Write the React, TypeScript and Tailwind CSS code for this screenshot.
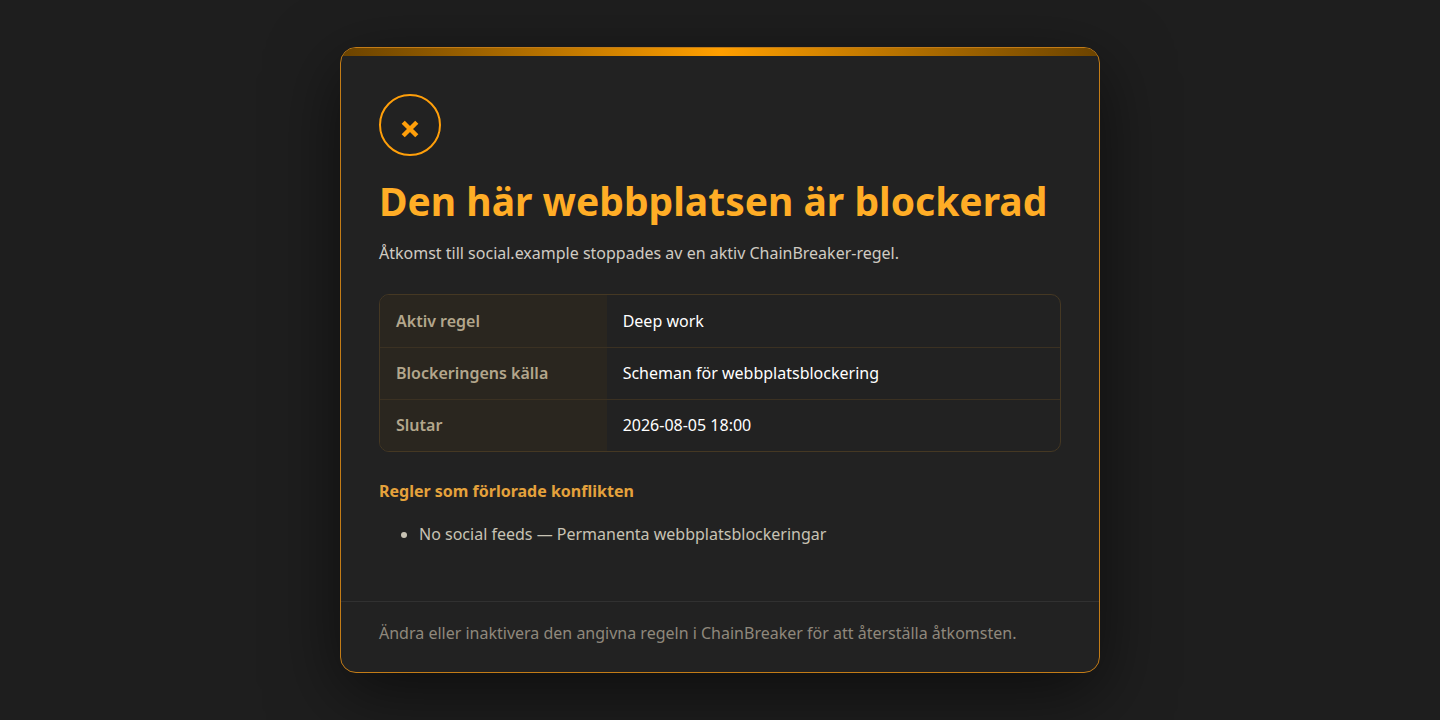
const details = [
  { label: "Aktiv regel", value: "Deep work" },
  { label: "Blockeringens källa", value: "Scheman för webbplatsblockering" },
  { label: "Slutar", value: "2026-08-05 18:00" },
];

const lostRules = ["No social feeds — Permanenta webbplatsblockeringar"];

export default function App() {
  return (
    <div className="flex min-h-screen items-center justify-center bg-[#1e1e1e] px-6 py-8 font-['Noto_Sans','Open_Sans',sans-serif] text-base leading-[30px] text-white">
      <main className="w-full max-w-[760px] overflow-hidden rounded-2xl border border-[#c37c17] bg-[#222222] shadow-[0_20px_70px_rgba(0,0,0,0.55)]">
        <div className="h-2 bg-linear-to-r from-[#6b4300] via-[#ff9f00] to-[#6b4300]" />
        <div className="px-[38px] pt-[38px] pb-[51px]">
          <div className="flex size-[62px] items-center justify-center rounded-full border-2 border-[#ff9f0a] pt-2">
            <svg
              viewBox="0 0 18 18"
              className="size-[18px] text-[#ff9f0a]"
              fill="none"
              stroke="currentColor"
              strokeWidth="4.4"
              aria-hidden="true"
            >
              <path d="M2.2 2.2 15.8 15.8M15.8 2.2 2.2 15.8" />
            </svg>
          </div>
          <h1 className="mt-5 text-[39px] leading-[50px] font-bold text-[#ffad26]">
            Den här webbplatsen är blockerad
          </h1>
          <p className="mt-3 text-[#d0cbc2]">
            Åtkomst till social.example stoppades av en aktiv ChainBreaker-regel.
          </p>
          <div className="mt-[26px] overflow-hidden rounded-[10px] border border-[#453823]">
            <table className="w-full table-fixed text-left">
              <tbody className="divide-y divide-[#3b3122]">
                {details.map((row) => (
                  <tr key={row.label} className="h-[52px]">
                    <th scope="row" className="w-1/3 bg-[#2a261f] px-4 font-semibold text-[#b3a68c]">
                      {row.label}
                    </th>
                    <td className="px-4">{row.value}</td>
                  </tr>
                ))}
              </tbody>
            </table>
          </div>
          <h2 className="mt-6 font-bold text-[#e5a23c]">Regler som förlorade konflikten</h2>
          <ul className="mt-3 list-disc pl-10 leading-8 text-[#c8c3b4]">
            {lostRules.map((rule) => (
              <li key={rule}>{rule}</li>
            ))}
          </ul>
        </div>
        <footer className="border-t border-[#313131] px-[38px] pt-4 pb-6 text-[#8f887c]">
          Ändra eller inaktivera den angivna regeln i ChainBreaker för att återställa åtkomsten.
        </footer>
      </main>
    </div>
  );
}
